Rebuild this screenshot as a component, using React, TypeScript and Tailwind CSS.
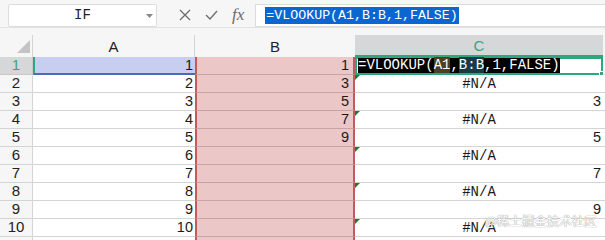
import React from "react";

const mono = { fontFamily: '"Liberation Mono", "DejaVu Sans Mono", monospace' };

type CVal = { t: "na" } | { t: "num"; v: string } | { t: "formula" };

const rows: { a: string; b: string; c: CVal }[] = [
  { a: "1", b: "1", c: { t: "formula" } },
  { a: "2", b: "3", c: { t: "na" } },
  { a: "3", b: "5", c: { t: "num", v: "3" } },
  { a: "4", b: "7", c: { t: "na" } },
  { a: "5", b: "9", c: { t: "num", v: "5" } },
  { a: "6", b: "", c: { t: "na" } },
  { a: "7", b: "", c: { t: "num", v: "7" } },
  { a: "8", b: "", c: { t: "na" } },
  { a: "9", b: "", c: { t: "num", v: "9" } },
  { a: "10", b: "", c: { t: "na" } },
];

export default function App() {
  return (
    <div className="relative w-[605px] h-[240px] overflow-hidden bg-[#f6f6f6] font-['Liberation_Sans',sans-serif] text-[#1a1a1a]">
      {/* formula bar */}
      <div className="flex items-center h-[28px] border-b border-[#e2e2e2] bg-[#f6f6f6] pt-[4px] pb-[1px]">
        <div className="ml-[8px] w-[149px] h-[23px] bg-white border border-[#dcdcdc] rounded-[2px] relative flex items-center justify-center">
          <span className="text-[14px] text-[#222]" style={mono}>IF</span>
          <svg className="absolute right-[3px] top-[9px]" width="7" height="4" viewBox="0 0 7 4">
            <path d="M0 0 L7 0 L3.5 4 Z" fill="#8a8a8a" />
          </svg>
        </div>
        <div className="flex items-center ml-[22px] gap-[14px] text-[#666]">
          <svg width="12" height="12" viewBox="0 0 12 12">
            <path d="M1 1 L11 11 M11 1 L1 11" stroke="#6b6b6b" strokeWidth="1.3" />
          </svg>
          <svg width="13" height="10" viewBox="0 0 13 10">
            <path d="M1 5 L5 9 L12 1" stroke="#6b6b6b" strokeWidth="1.3" fill="none" />
          </svg>
          <span className="italic text-[17px] leading-none text-[#6b6b6b] font-['Liberation_Serif',serif] -mt-[2px]">fx</span>
        </div>
        <div className="ml-[11px] flex-1 h-[23px] bg-white border border-[#dcdcdc] border-r-0 flex items-center pl-[9px]">
          <span className="bg-[#0b66cf] text-white text-[13.3px] leading-[17px] px-[1px]" style={mono}>=VLOOKUP(A1,B:B,1,FALSE)</span>
        </div>
      </div>

      {/* column header */}
      <div className="flex h-[29px] pt-[7px]">
        <div className="w-[33px] h-[22px] relative border-r border-[#d4d4d4] bg-[#f6f6f6]">
          <svg className="absolute left-[17px] top-[5px]" width="13" height="13" viewBox="0 0 13 13">
            <path d="M13 0 L13 13 L0 13 Z" fill="#c4c4c4" />
          </svg>
        </div>
        <div className="w-[162px] h-[22px] flex items-center justify-center border-r border-[#d4d4d4] text-[15px] text-[#222] pt-[2px]">A</div>
        <div className="w-[160px] h-[22px] flex items-center justify-center text-[15px] text-[#222] pt-[2px]">B</div>
        <div className="w-[248px] h-[22px] flex items-center justify-center bg-[#d6d7d9] border-b-2 border-[#2fa77c] text-[15px] text-[#3aa57e] pt-[2px]">C</div>
        <div className="flex-1 h-[22px]" />
      </div>

      {/* grid */}
      <div className="flex flex-col bg-white">
        {rows.map((r, i) => {
          const first = i === 0;
          return (
            <div key={i} className="flex h-[18px]">
              <div
                className={
                  first
                    ? "w-[33px] flex items-center justify-center bg-[#d6d7d9] border-r border-b border-[#c8c8c8] text-[15px] text-[#3aa57e]"
                    : "w-[33px] flex items-center justify-center bg-[#f6f6f6] border-r border-b border-[#d4d4d4] text-[15px] text-[#222]"
                }
              >
                {i + 1}
              </div>
              <div
                className={
                  first
                    ? "w-[162px] flex items-center justify-end pr-[2px] bg-[#c7cef0] border-b-2 border-l-2 border-l-[#2fa77c] border-b-[#4a6cb3] text-[14.5px] leading-none"
                    : "w-[162px] flex items-center justify-end pr-[2px] border-b border-[#d4d4d4] text-[14.5px] leading-none"
                }
              >
                {r.a}
              </div>
              <div className="w-[160px] flex items-center justify-end pr-[4px] bg-[#ecc7c8] border-l-2 border-r-2 border-[#c35a5d] border-b border-b-[#c9a3a4] text-[14.5px] leading-none">
                {r.b}
              </div>
              <div
                className={
                  first
                    ? "w-[248px] relative flex items-center border-2 border-[#2fa77c] pl-[1px]"
                    : "w-[248px] relative flex items-center border-b border-[#d4d4d4]"
                }
              >
                {r.c.t === "formula" && (
                  <>
                    <span className="bg-black text-white text-[14px] leading-[15px] -mt-[1px]" style={mono}>
                      =VLOOKUP(<span className="bg-[#4a4022]">A1</span>,<span className="bg-[#163a46]">B:B</span>,1,FALSE)
                    </span>
                    <div className="absolute -right-[3px] -bottom-[3px] w-[5px] h-[5px] bg-[#2fa77c] border border-white" />
                  </>
                )}
                {r.c.t === "na" && (
                  <>
                    <svg className="absolute left-0 top-0" width="5" height="5" viewBox="0 0 5 5">
                      <path d="M0 0 L5 0 L0 5 Z" fill="#1f7a2e" />
                    </svg>
                    <span className="w-full text-center text-[14px] leading-none" style={mono}>#N/A</span>
                  </>
                )}
                {r.c.t === "num" && (
                  <span className="w-full text-right pr-[2px] text-[14.5px] leading-none">{r.c.v}</span>
                )}
              </div>
              <div className="flex-1 border-b border-[#d4d4d4]" />
            </div>
          );
        })}
        <div className="flex h-[10px]">
          <div className="w-[33px] bg-[#f6f6f6] border-r border-[#d4d4d4]" />
          <div className="w-[162px]" />
          <div className="w-[160px] bg-[#ecc7c8] border-l-2 border-r-2 border-[#c35a5d]" />
          <div className="flex-1" />
        </div>
      </div>

      {/* watermark */}
      <div
        className="absolute left-[485px] top-[213px] text-[12.5px] leading-[16px] whitespace-nowrap text-[#ffffff] font-['Noto_Sans_CJK_SC',sans-serif]"
        style={{ textShadow: "0 0 1px #9a9a9a, 0 0 1px #9a9a9a" }}
      >
        @稀土掘金技术社区
      </div>
    </div>
  );
}
